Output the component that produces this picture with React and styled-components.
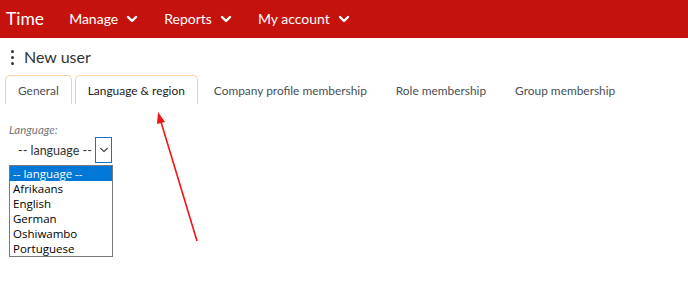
import React from "react";
import styled, { createGlobalStyle } from "styled-components";

const GlobalStyle = createGlobalStyle`
  html, body {
    margin: 0;
    padding: 0;
    background: #fff;
    font-family: Lato, "Open Sans", sans-serif;
  }
`;

const languages = ["-- language --", "Afrikaans", "English", "German", "Oshiwambo", "Portuguese"];

const tabs = [
  { label: "General", outlined: true },
  { label: "Language & region", outlined: true, active: true },
  { label: "Company profile membership" },
  { label: "Role membership" },
  { label: "Group membership" },
];

function Chevron({ size = 12, color = "#fff", width = 2.4 }) {
  return (
    <svg width={size} height={size} viewBox="0 0 12 12" fill="none">
      <path d="M2 4 L6 8 L10 4" stroke={color} strokeWidth={width} strokeLinecap="round" strokeLinejoin="round" />
    </svg>
  );
}

function App() {
  return (
    <Page>
      <GlobalStyle />
      <TopBar>
        <Brand>Time</Brand>
        <Menu>
          <MenuItem>
            Manage <Chevron />
          </MenuItem>
          <MenuItem>
            Reports <Chevron />
          </MenuItem>
          <MenuItem>
            My account <Chevron />
          </MenuItem>
        </Menu>
      </TopBar>

      <Title>
        <Dots>
          <span />
          <span />
          <span />
        </Dots>
        New user
      </Title>

      <TabRow>
        {tabs.map((t) => (
          <Tab key={t.label} $outlined={t.outlined} $active={t.active}>
            {t.label}
          </Tab>
        ))}
      </TabRow>

      <Form>
        <Label>Language:</Label>
        <SelectBox>
          <SelectText>-- language --</SelectText>
          <SelectButton>
            <Chevron size={10} color="#333" width={1.3} />
          </SelectButton>
        </SelectBox>
        <OptionList>
          {languages.map((l, i) => (
            <Option key={l} $selected={i === 0}>
              {l}
            </Option>
          ))}
        </OptionList>
      </Form>

      <Annotation width="688" height="283" viewBox="0 0 688 283">
        <line x1="197" y1="241" x2="161" y2="122" stroke="#f21313" strokeWidth="1.6" />
        <polygon points="158,112 157,124 165,122" fill="#f21313" />
      </Annotation>
    </Page>
  );
}

const Page = styled.div`
  position: relative;
  width: 688px;
  height: 283px;
  overflow: hidden;
`;

const TopBar = styled.div`
  display: flex;
  align-items: center;
  height: 38px;
  background: #c5120c;
  color: #fff;
  padding-left: 6px;
`;

const Brand = styled.div`
  font-size: 17.5px;
  margin-right: 25px;
  margin-top: -1px;
`;

const Menu = styled.div`
  display: flex;
  gap: 26px;
`;

const MenuItem = styled.div`
  display: flex;
  align-items: center;
  gap: 8px;
  font-size: 14px;
  margin-top: -1px;
`;

const Title = styled.div`
  display: flex;
  align-items: center;
  height: 37px;
  padding-left: 11px;
  font-size: 16px;
  color: #333;
`;

const Dots = styled.div`
  display: flex;
  flex-direction: column;
  gap: 3px;
  margin-right: 10px;
  margin-top: 1px;

  span {
    width: 3px;
    height: 3px;
    border-radius: 50%;
    background: #333;
  }
`;

const TabRow = styled.div`
  display: flex;
  gap: 3px;
  padding-left: 5px;
`;

const Tab = styled.div`
  height: 29px;
  box-sizing: border-box;
  padding: 0 12px;
  display: flex;
  align-items: center;
  font-size: 11.9px;
  color: ${(p) => (p.$active ? "#222" : "#4a4f55")};
  border: 1px solid ${(p) => (p.$outlined ? "#f9cf9f" : "transparent")};
  border-bottom: none;
  border-radius: 5px 5px 0 0;
  background: #fff;
`;

const Form = styled.div`
  padding: 19px 0 0 9px;
`;

const Label = styled.div`
  font-size: 11.5px;
  font-style: italic;
  color: #777;
`;

const SelectBox = styled.div`
  display: flex;
  align-items: center;
  margin-top: 1px;
  height: 26px;
`;

const SelectText = styled.span`
  font-size: 12.5px;
  color: #333;
  padding-left: 9px;
  width: 77px;
`;

const SelectButton = styled.div`
  width: 17px;
  height: 26px;
  box-sizing: border-box;
  border: 1px solid #1b6fc9;
  display: flex;
  align-items: center;
  justify-content: center;
`;

const OptionList = styled.div`
  width: 104px;
  box-sizing: border-box;
  border: 1px solid #7a7a7a;
  margin-top: 2px;
  background: #fff;
`;

const Option = styled.div`
  height: 15px;
  line-height: 15px;
  padding-left: 3px;
  font-family: "Open Sans", "Noto Sans", sans-serif;
  font-size: 11.5px;
  color: ${(p) => (p.$selected ? "#fff" : "#000")};
  background: ${(p) => (p.$selected ? "#0078d7" : "transparent")};
`;

const Annotation = styled.svg`
  position: absolute;
  left: 0;
  top: 0;
  pointer-events: none;
`;

export default App;
